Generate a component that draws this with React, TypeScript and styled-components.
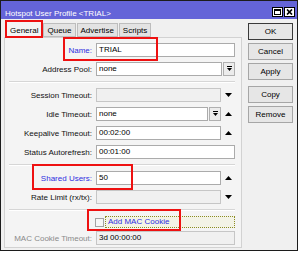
import styled, { createGlobalStyle } from 'styled-components'

const GlobalStyle = createGlobalStyle`
  html, body {
    margin: 0;
    padding: 0;
    background: #ffffff;
  }

  body {
    font-family: 'Liberation Sans', Arial, sans-serif;
    font-size: 8px;
    color: #000;
  }
`

const Window = styled.div`
  position: relative;
  box-sizing: border-box;
  width: 298px;
  height: 251px;
  border: 1px solid #1c1c1c;
  background: #f0f0f0;
  display: flex;
  flex-direction: column;
`

const TitleBar = styled.div`
  box-sizing: border-box;
  height: 18px;
  flex: none;
  display: flex;
  align-items: flex-end;
  gap: 1px;
  padding: 0 2px 1px 4px;
  background: #6464d8;
  color: #fff;
`

const TitleText = styled.span`
  flex: 1;
  line-height: 8px;
  white-space: nowrap;
`

const TitleButton = styled.div`
  box-sizing: border-box;
  width: 11px;
  height: 10px;
  margin-bottom: 1px;
  border: 1px solid #000;
  background: #fff;
  display: flex;
  align-items: center;
  justify-content: center;
`

const Body = styled.div`
  flex: 1;
  display: flex;
  padding: 0 4px 2px 3px;
  min-height: 0;
`

const LeftCol = styled.div`
  width: 238px;
  display: flex;
  flex-direction: column;
`

const TabRow = styled.div`
  height: 18px;
  flex: none;
  display: flex;
  align-items: flex-end;
  gap: 1px;
  padding-left: 2px;
`

const Tab = styled.div<{ $active?: boolean }>`
  box-sizing: border-box;
  height: ${({ $active }) => ($active ? 17 : 14)}px;
  margin-bottom: ${({ $active }) => ($active ? -1 : 0)}px;
  padding: 0 3px;
  border: 1px solid #bdbdbd;
  border-bottom: ${({ $active }) => ($active ? 'none' : '1px solid #bdbdbd')};
  background: ${({ $active }) => ($active ? '#f4f4f4' : '#e3e3e3')};
  display: flex;
  align-items: center;
  justify-content: center;
  position: relative;
  z-index: ${({ $active }) => ($active ? 1 : 0)};
  white-space: nowrap;
`

const Panel = styled.div`
  flex: 1;
  box-sizing: border-box;
  border: 1px solid #d2d2d2;
  background: #f4f4f4;
  padding: 5px 6px 0 0;
  display: flex;
  flex-direction: column;
  gap: 5px;
`

const Row = styled.div`
  height: 14px;
  display: flex;
  align-items: center;
`

const Label = styled.span<{ $tone?: 'accent' | 'muted' }>`
  width: 87px;
  margin-right: 4px;
  flex: none;
  text-align: right;
  white-space: nowrap;
  color: ${({ $tone }) =>
    $tone === 'accent' ? '#2e2ee0' : $tone === 'muted' ? '#8a8a8a' : '#111'};
`

const Input = styled.div<{ $disabled?: boolean }>`
  flex: 1;
  box-sizing: border-box;
  height: 14px;
  border: 1px solid ${({ $disabled }) => ($disabled ? '#c6c6c6' : '#ababab')};
  background: ${({ $disabled }) => ($disabled ? '#f0f0f0' : '#ffffff')};
  padding-left: 2px;
  line-height: 12px;
  white-space: nowrap;
  overflow: hidden;
`

const DropButton = styled.div`
  box-sizing: border-box;
  width: 12px;
  height: 14px;
  margin-left: 1px;
  flex: none;
  border: 1px solid #b0b0b0;
  background: #ececec;
  display: flex;
  align-items: center;
  justify-content: center;
`

const ArrowCell = styled.div`
  width: 13px;
  margin-left: 1px;
  flex: none;
  display: flex;
  align-items: center;
  justify-content: center;
`

const Divider = styled.div`
  height: 0;
  margin-left: 4px;
  border-top: 1px solid #d6d6d6;
  border-bottom: 1px solid #ffffff;
`

const CheckRow = styled.div`
  height: 12px;
  margin-bottom: -2px;
  display: flex;
  align-items: center;
  padding-left: 90px;
`

const CheckBox = styled.div`
  box-sizing: border-box;
  width: 9px;
  height: 9px;
  flex: none;
  border: 1px solid #a2a2a2;
  background: #f6f6f6;
`

const FocusLabel = styled.div`
  flex: 1;
  box-sizing: border-box;
  height: 12px;
  margin-left: 1px;
  padding-left: 2px;
  border: 1px dotted #8c8c24;
  background: #f3f3e6;
  color: #2e2ee0;
  line-height: 10px;
  white-space: nowrap;
`

const RightCol = styled.div`
  flex: 1;
  display: flex;
  flex-direction: column;
  padding: 4px 0 0 6px;
  gap: 3px;
`

const Button = styled.div<{ $primary?: boolean; $spaced?: boolean }>`
  box-sizing: border-box;
  height: 17px;
  margin-top: ${({ $spaced }) => ($spaced ? 3 : 0)}px;
  border: 1px solid ${({ $primary }) => ($primary ? '#3a3a3a' : '#a6a6a6')};
  background: #e6e6e6;
  display: flex;
  align-items: center;
  justify-content: center;
`

const Annotation = styled.div<{ $x: number; $y: number; $w: number; $h: number }>`
  position: absolute;
  left: ${({ $x }) => $x}px;
  top: ${({ $y }) => $y}px;
  width: ${({ $w }) => $w}px;
  height: ${({ $h }) => $h}px;
  box-sizing: border-box;
  border: 2px solid #ee1111;
  pointer-events: none;
  z-index: 5;
`

function UpArrow() {
  return (
    <svg width="7" height="4" viewBox="0 0 7 4">
      <polygon points="0,4 7,4 3.5,0" fill="#000" />
    </svg>
  )
}

function DownArrow() {
  return (
    <svg width="7" height="4" viewBox="0 0 7 4">
      <polygon points="0,0 7,0 3.5,4" fill="#000" />
    </svg>
  )
}

function DropIcon() {
  return (
    <svg width="5" height="6" viewBox="0 0 5 6">
      <rect x="0" y="0" width="5" height="1" fill="#000" />
      <polygon points="0,2 5,2 2.5,5" fill="#000" />
    </svg>
  )
}

function MaximizeIcon() {
  return (
    <svg width="7" height="6" viewBox="0 0 7 6">
      <rect x="0.5" y="0.5" width="6" height="5" fill="none" stroke="#000" />
      <rect x="0" y="0" width="7" height="2" fill="#000" />
    </svg>
  )
}

function CloseIcon() {
  return (
    <svg width="7" height="6" viewBox="0 0 7 6">
      <path d="M1 0.5 L6 5.5 M6 0.5 L1 5.5" stroke="#000" strokeWidth="1.7" />
    </svg>
  )
}

export default function App() {
  return (
    <>
      <GlobalStyle />
      <Window>
        <TitleBar>
          <TitleText>Hotspot User Profile &lt;TRIAL&gt;</TitleText>
          <TitleButton>
            <MaximizeIcon />
          </TitleButton>
          <TitleButton>
            <CloseIcon />
          </TitleButton>
        </TitleBar>

        <Body>
          <LeftCol>
            <TabRow>
              <Tab $active>General</Tab>
              <Tab>Queue</Tab>
              <Tab>Advertise</Tab>
              <Tab>Scripts</Tab>
            </TabRow>

            <Panel>
              <Row>
                <Label $tone="accent">Name:</Label>
                <Input>TRIAL</Input>
              </Row>
              <Row>
                <Label>Address Pool:</Label>
                <Input>none</Input>
                <DropButton>
                  <DropIcon />
                </DropButton>
              </Row>

              <Divider />

              <Row>
                <Label>Session Timeout:</Label>
                <Input $disabled />
                <ArrowCell>
                  <DownArrow />
                </ArrowCell>
              </Row>
              <Row>
                <Label>Idle Timeout:</Label>
                <Input>none</Input>
                <DropButton>
                  <DropIcon />
                </DropButton>
                <ArrowCell>
                  <UpArrow />
                </ArrowCell>
              </Row>
              <Row>
                <Label>Keepalive Timeout:</Label>
                <Input>00:02:00</Input>
                <ArrowCell>
                  <UpArrow />
                </ArrowCell>
              </Row>
              <Row>
                <Label>Status Autorefresh:</Label>
                <Input>00:01:00</Input>
              </Row>

              <Divider />

              <Row>
                <Label $tone="accent">Shared Users:</Label>
                <Input>50</Input>
                <ArrowCell>
                  <UpArrow />
                </ArrowCell>
              </Row>
              <Row>
                <Label>Rate Limit (rx/tx):</Label>
                <Input $disabled />
                <ArrowCell>
                  <DownArrow />
                </ArrowCell>
              </Row>

              <Divider />

              <CheckRow>
                <CheckBox />
                <FocusLabel>Add MAC Cookie</FocusLabel>
              </CheckRow>
              <Row>
                <Label $tone="muted">MAC Cookie Timeout:</Label>
                <Input $disabled>3d 00:00:00</Input>
              </Row>
            </Panel>
          </LeftCol>

          <RightCol>
            <Button $primary>OK</Button>
            <Button>Cancel</Button>
            <Button>Apply</Button>
            <Button $spaced>Copy</Button>
            <Button>Remove</Button>
          </RightCol>
        </Body>

        <Annotation $x={4} $y={19} $w={38} $h={18} />
        <Annotation $x={62} $y={36} $w={95} $h={24} />
        <Annotation $x={31} $y={163} $w={101} $h={26} />
        <Annotation $x={86} $y={208} $w={94} $h={22} />
      </Window>
    </>
  )
}
